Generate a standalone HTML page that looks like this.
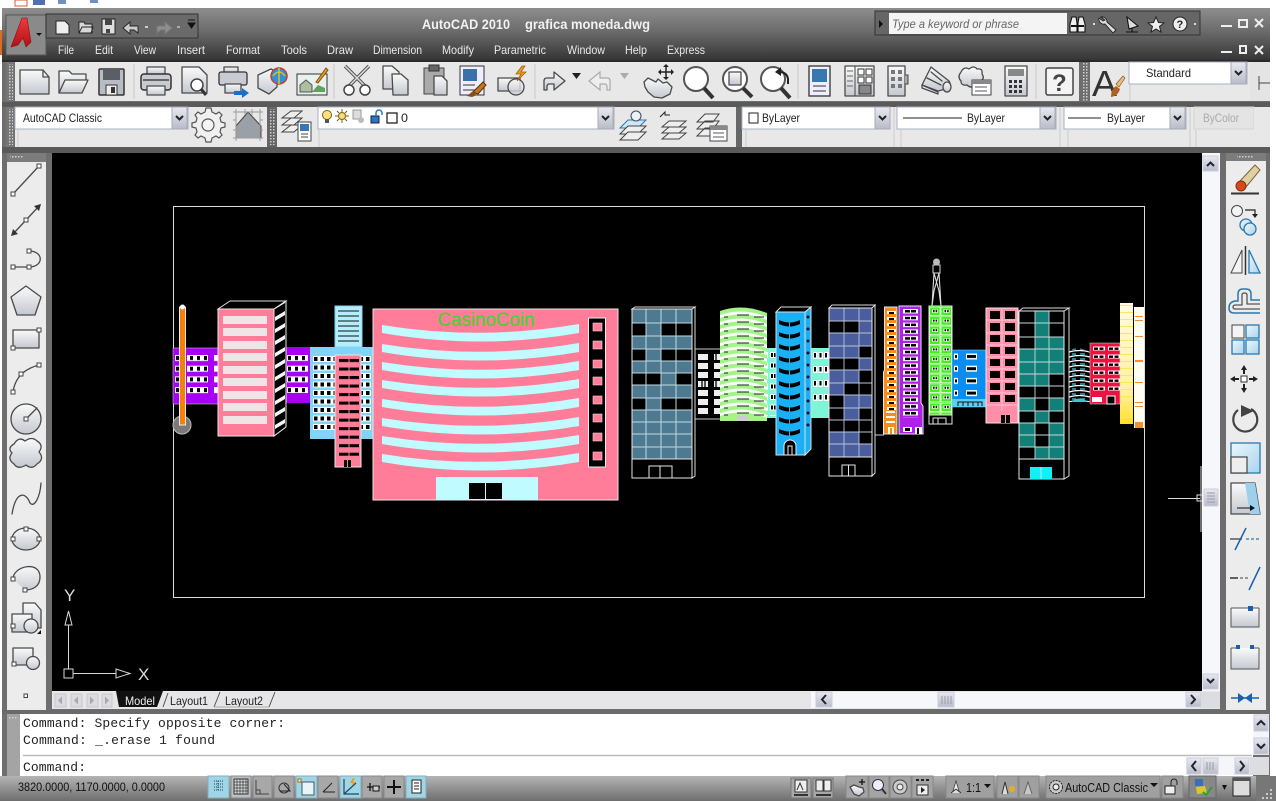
<!DOCTYPE html>
<html>
<head>
<meta charset="utf-8">
<title>AutoCAD 2010</title>
<style>
html,body{margin:0;padding:0;background:#fff;width:1276px;height:801px;overflow:hidden}
svg{display:block;position:absolute;left:0;top:0;filter:blur(.35px)}
text{font-family:"Liberation Sans",sans-serif}
.m{font-size:12px;fill:#e8e8e8}
.t{font-size:12px;fill:#222}
.c{font-family:"Liberation Mono",monospace;font-size:13px;fill:#222}
.i{fill:url(#ic);stroke:#4a4a4a;stroke-width:1.3;stroke-linejoin:round}
.n{fill:none;stroke:#4a4a4a;stroke-width:1.3;stroke-linejoin:round;stroke-linecap:round}
.b{fill:url(#bl);stroke:#2a78b0;stroke-width:1.3}
.bn{fill:none;stroke:#2a78b0;stroke-width:1.5}
.w{fill:none;stroke:#e6e6e6;stroke-width:1}
.p{fill:#fff;stroke:#444;stroke-width:1}
</style>
</head>
<body>
<svg width="1276" height="801" viewBox="0 0 1276 801" xmlns="http://www.w3.org/2000/svg">
<defs>
<linearGradient id="tb" x1="0" y1="0" x2="0" y2="1"><stop offset="0" stop-color="#8e8e8e"/><stop offset=".45" stop-color="#6a6a6a"/><stop offset="1" stop-color="#333"/></linearGradient>
<linearGradient id="ic" x1="0" y1="0" x2="0" y2="1"><stop offset="0" stop-color="#fafafa"/><stop offset="1" stop-color="#c4c8d0"/></linearGradient>
<linearGradient id="bl" x1="0" y1="0" x2="1" y2="1"><stop offset="0" stop-color="#eef6fb"/><stop offset="1" stop-color="#a8d4ee"/></linearGradient>
<linearGradient id="sb" x1="0" y1="0" x2="0" y2="1"><stop offset="0" stop-color="#b4b4b4"/><stop offset="1" stop-color="#6e6e6e"/></linearGradient>
<linearGradient id="btn" x1="0" y1="0" x2="0" y2="1"><stop offset="0" stop-color="#e8eaf0"/><stop offset="1" stop-color="#b8bcc8"/></linearGradient>
<linearGradient id="red" x1="0" y1="0" x2="0" y2="1"><stop offset="0" stop-color="#f03a3a"/><stop offset="1" stop-color="#b01018"/></linearGradient>
<linearGradient id="yel" x1="0" y1="0" x2="0" y2="1"><stop offset="0" stop-color="#fffbe0"/><stop offset=".75" stop-color="#fff0a0"/><stop offset="1" stop-color="#ffe020"/></linearGradient>
<pattern id="pa" patternUnits="userSpaceOnUse" x="175" y="355" width="7" height="10.7"><rect x="0" y="0" width="7" height="6" fill="#fff"/><rect x="1" y="1" width="3" height="4" fill="#000"/></pattern>
<pattern id="pb" patternUnits="userSpaceOnUse" x="313" y="356" width="6.5" height="8.5"><rect width="6.5" height="6" fill="#fff"/><rect x="1" y="1" width="3.5" height="4" fill="#000"/></pattern>
<pattern id="pc" patternUnits="userSpaceOnUse" x="337" y="358" width="24" height="8.52"><rect x="2" y="1" width="9.5" height="3" fill="#000"/><rect x="12.5" y="1" width="9.5" height="3" fill="#000"/></pattern>
<pattern id="pd" patternUnits="userSpaceOnUse" x="886" y="310" width="11" height="6"><rect x="1" y="1" width="9" height="3" fill="#fff"/><rect x="3" y="2" width="5" height="2" fill="#000"/></pattern>
<pattern id="pe" patternUnits="userSpaceOnUse" x="901" y="309" width="20" height="6.8"><rect x="2" y="0" width="15" height="4.5" fill="#fff"/><rect x="4" y="1" width="5" height="2.5" fill="#000"/><rect x="10" y="1" width="5" height="2.5" fill="#000"/></pattern>
<pattern id="pf" patternUnits="userSpaceOnUse" x="929" y="307" width="11.5" height="9.6"><rect x=".5" y="0" width="10.5" height="8.6" fill="none" stroke="#fff" stroke-width=".8"/><rect x="3" y="2.5" width="6" height="3.2" fill="#fff"/><rect x="4" y="3" width="1.6" height="2" fill="#000"/><rect x="6.6" y="3" width="1.6" height="2" fill="#000"/></pattern>
<pattern id="pg" patternUnits="userSpaceOnUse" x="953" y="352" width="33" height="12.2"><rect x="1" y="1.5" width="4" height="6" fill="#fff"/><rect x="13" y="1.5" width="11" height="6" fill="#fff"/><rect x="14" y="3" width="9" height="3" fill="#000"/><rect x="2" y="3" width="2" height="3" fill="#000"/></pattern>
<pattern id="ph" patternUnits="userSpaceOnUse" x="1092" y="345" width="15" height="8"><rect x="1" y="1.5" width="12" height="4" fill="#fff"/><rect x="2" y="2.5" width="4" height="2.4" fill="#000"/><rect x="7.5" y="2.5" width="4" height="2.4" fill="#000"/></pattern>
<pattern id="pi" patternUnits="userSpaceOnUse" x="769" y="350" width="9" height="10.5"><rect x="1" y="2" width="7" height="6" fill="#fff"/><rect x="2" y="3" width="2" height="4" fill="#000"/><rect x="5" y="3" width="2" height="4" fill="#000"/></pattern>
<pattern id="pj" patternUnits="userSpaceOnUse" x="813" y="350" width="5.5" height="14"><rect x="0" y="2" width="4.5" height="7" fill="#fff"/><rect x="1" y="3" width="2" height="4.5" fill="#000"/></pattern>
<pattern id="pk" patternUnits="userSpaceOnUse" x="1120" y="305" width="13" height="7"><rect y="0" width="13" height="1" fill="#ffe860"/></pattern>
<pattern id="pl" patternUnits="userSpaceOnUse" x="1069" y="350" width="21" height="5"><path d="M0,2 Q10,-1 21,2" stroke="#fff" stroke-width="1.2" fill="none"/><path d="M3,4 h4 M11,4 h5" stroke="#4cd" stroke-width="1.2"/></pattern>
<pattern id="st" patternUnits="userSpaceOnUse" width="12" height="12" patternTransform="translate(274 309)"><rect width="12" height="12" fill="#000"/><path d="M1,8 L11,2 L11,6 L1,12z" fill="#f4f4f4"/></pattern>
<pattern id="dt" patternUnits="userSpaceOnUse" width="3" height="3"><rect width="1.5" height="1.5" fill="#d0d0d0"/></pattern>
<g id="cw"><path d="M779,0 Q789.5,5 800,0 L800,4 Q789.5,9 779,4z" fill="#000"/><path d="M789.5,2.5 v4" stroke="#19b0f5" stroke-width="1"/></g>
<g id="gb"><path d="M0,0 Q23,-8 47,2 L47,5 Q23,-5 0,3z" fill="#fff" opacity=".9"/><path d="M4,2 h4 M17,0 h12 M34,2 h10" stroke="#222" stroke-width="1"/></g>
<g id="dd"><rect width="15" height="22" fill="url(#btn)" stroke="#a8acb8"/><path d="M4,9 l3.5,3.5 l3.5,-3.5" fill="none" stroke="#222" stroke-width="2"/></g>
</defs>

<!-- top strip -->
<rect width="1276" height="801" fill="#fff"/>
<rect x="15" y="0" width="12" height="6" fill="none" stroke="#d06030"/><rect x="33" y="0" width="12" height="5" fill="#5070b0"/><rect x="58" y="0" width="8" height="4" fill="#7090c0"/><rect x="90" y="0" width="8" height="3" fill="#7090c0"/>
<rect x="0" y="30" width="3" height="25" fill="#e06a20"/>

<!-- window frame -->
<rect x="2" y="8" width="1268" height="770" fill="#6e6e6e"/>
<rect x="2" y="8" width="1268" height="53" fill="url(#tb)"/>
<rect x="2" y="60" width="1268" height="2" fill="#2a2a2a"/>
<rect x="2" y="102" width="1268" height="5" fill="#5a5a5a"/>
<rect x="2" y="147" width="1268" height="6" fill="#5a5a5a"/>

<!-- App button -->
<rect x="6" y="15" width="40" height="40" fill="#8a8a8a" stroke="#555"/>
<path d="M11,47 L22,18 L27,18 L31,42 L26,47 L23,38 L18,45z" fill="url(#red)" stroke="#8a1010" stroke-width=".6"/>
<path d="M36,33 h6 l-3,3z" fill="#111"/>

<!-- QAT -->
<rect x="46" y="14" width="152" height="24" fill="#6a6a6a" stroke="#333"/>
<path d="M56,21 h9 l4,4 v9 h-13z" fill="#eee" stroke="#222"/>
<path d="M79,33 v-11 h5 l1,2 h7 v9z M79,33 l3,-6 h11 l-2,6z" fill="#d8d8d8" stroke="#222" stroke-width=".9"/>
<rect x="102" y="19" width="13" height="15" fill="#ddd" stroke="#222"/><rect x="105" y="19" width="7" height="6" fill="#444"/><rect x="106" y="29" width="4" height="4" fill="#444"/>
<path d="M138,33 v-7 h-8 v-4 l-7,6 l7,6 v-4 h4 l4,3z" fill="#ccc" stroke="#222" stroke-width=".9"/>
<path d="M145,27 h3" stroke="#ccc" stroke-width="2"/>
<path d="M157,33 v-7 h8 v-4 l7,6 l-7,6 v-4 h-4 l-4,3z" fill="#8e8e8e" stroke="#777"/>
<path d="M177,27 h3" stroke="#aaa" stroke-width="2"/>
<path d="M188,20 h7 M188,23 h7 l-3.500,5z" stroke="#111" fill="#111"/>

<!-- Title -->
<text x="422" y="29" font-size="14" font-weight="bold" fill="#f2f2f2" textLength="88" lengthAdjust="spacingAndGlyphs">AutoCAD 2010</text>
<text x="525" y="29" font-size="14" font-weight="bold" fill="#f2f2f2" textLength="125" lengthAdjust="spacingAndGlyphs">grafica moneda.dwg</text>

<!-- menu -->
<text class="m" x="58" y="54" textLength="16" lengthAdjust="spacingAndGlyphs">File</text>
<text class="m" x="95" y="54" textLength="18" lengthAdjust="spacingAndGlyphs">Edit</text>
<text class="m" x="134" y="54" textLength="22" lengthAdjust="spacingAndGlyphs">View</text>
<text class="m" x="177" y="54" textLength="28" lengthAdjust="spacingAndGlyphs">Insert</text>
<text class="m" x="226" y="54" textLength="34" lengthAdjust="spacingAndGlyphs">Format</text>
<text class="m" x="281" y="54" textLength="26" lengthAdjust="spacingAndGlyphs">Tools</text>
<text class="m" x="327" y="54" textLength="26" lengthAdjust="spacingAndGlyphs">Draw</text>
<text class="m" x="373" y="54" textLength="49" lengthAdjust="spacingAndGlyphs">Dimension</text>
<text class="m" x="442" y="54" textLength="32" lengthAdjust="spacingAndGlyphs">Modify</text>
<text class="m" x="494" y="54" textLength="52" lengthAdjust="spacingAndGlyphs">Parametric</text>
<text class="m" x="567" y="54" textLength="38" lengthAdjust="spacingAndGlyphs">Window</text>
<text class="m" x="625" y="54" textLength="22" lengthAdjust="spacingAndGlyphs">Help</text>
<text class="m" x="667" y="54" textLength="38" lengthAdjust="spacingAndGlyphs">Express</text>

<!-- search -->
<rect x="875" y="11" width="325" height="24" fill="#666" stroke="#333"/>
<path d="M879,20 l4,4 l-4,4z" fill="#111"/>
<rect x="889" y="13" width="178" height="21" fill="#f4f4f4"/>
<text x="892" y="28" font-size="12" font-style="italic" fill="#666" textLength="127" lengthAdjust="spacingAndGlyphs">Type a keyword or phrase</text>
<path d="M1070,32 v-8 l2,-7 h4 l1,6 v9z M1078,32 v-9 l1,-6 h4 l2,7 v8z" fill="#eee" stroke="#111" stroke-width="1.100"/>
<path d="M1071,26 h6 M1078,26 h6" stroke="#111" stroke-width="2"/>
<path d="M1093,24 h2" stroke="#ddd" stroke-width="2"/>
<path d="M1101,17 a5,5 0 0 1 6,5 l9,8 l-3,3 l-8,-9 a5,5 0 0 1 -6,-6 l4,3 l2,-1z" fill="#ddd" stroke="#222" stroke-width=".9"/>
<path d="M1127,17 l11,9 l-9,3z M1126,32 h12 M1132,28 v4" fill="#ddd" stroke="#111" stroke-width="1.100"/>
<path d="M1156,17 l2.500,5.500 l5.500,.5 l-4.500,3.500 l1.500,5.500 l-5,-3 l-5,3 l1.500,-5.500 l-4.500,-3.500 l5.500,-.5z" fill="#eee" stroke="#222"/>
<circle cx="1180" cy="24" r="7" fill="#eee" stroke="#222"/><text x="1176.500" y="28" font-size="11" font-weight="bold" fill="#222">?</text>
<path d="M1194,24 h2" stroke="#ddd" stroke-width="2"/>
<!-- window buttons -->
<g fill="none" stroke="#eee" stroke-width="2">
<path d="M1221,26 h11"/><rect x="1239" y="20" width="8" height="7"/><path d="M1255,19 l8,8 m0,-8 l-8,8"/>
<path d="M1221,52 h11"/><rect x="1240" y="46" width="6" height="7"/><path d="M1255,46 l8,8 m0,-8 l-8,8"/>
</g>

<!-- toolbar row 1 -->
<rect x="6" y="62" width="8" height="39" fill="#777"/><rect x="8" y="64" width="5" height="36" fill="url(#dt)"/>
<rect x="15" y="62" width="1064" height="39" fill="#e8e8e8"/>
<rect x="1090" y="62" width="160" height="39" fill="#e8e8e8"/>
<rect x="1082" y="62" width="7" height="39" fill="url(#dt)"/>
<path d="M134,64 v35 M334,64 v35 M535,64 v35 M798,64 v35 M1036,64 v35" stroke="#c8c8c8"/>
<!-- new -->
<path d="M20,70 h23 l6,7 v17 h-29z" class="i"/><path d="M43,70 v7 h6" class="n"/>
<!-- open -->
<path d="M59,93 v-22 h10 l3,3 h14 v6" class="i"/><path d="M59,93 l6,-13 h23 l-6,13z" class="i"/>
<!-- save -->
<rect x="99" y="69" width="25" height="26" rx="1" fill="#b8bcc4" stroke="#333" stroke-width="1.500"/><rect x="103" y="69" width="17" height="11" fill="#5a5e66"/><rect x="106" y="85" width="11" height="10" fill="#eee" stroke="#333"/><rect x="111" y="87" width="4" height="6" fill="#333"/>
<!-- print -->
<path d="M147,74 v-7 h18 v7" class="i"/><rect x="141" y="74" width="30" height="16" rx="3" fill="#c8ccd2" stroke="#333" stroke-width="1.500"/><rect x="147" y="86" width="18" height="9" class="i"/><rect x="143" y="79" width="26" height="2" fill="#666"/>
<!-- preview -->
<path d="M182,67 h17 l8,8 v18 h-25z" class="i"/><circle cx="197" cy="85" r="6" fill="#fff" stroke="#444" stroke-width="1.500"/><path d="M201,89 l5,6" stroke="#333" stroke-width="3"/>
<!-- plot -->
<path d="M224,72 v-5 h14 v5" class="i"/><rect x="219" y="72" width="28" height="13" rx="2" fill="#c8ccd2" stroke="#333" stroke-width="1.300"/><rect x="225" y="84" width="16" height="9" class="i"/><path d="M234,91 h8 v-3 l7,5 l-7,5 v-3 h-8z" fill="#1a70c8"/>
<!-- publish -->
<path d="M258,75 l13,-6 l6,3 v15 l-8,7 l-11,-6z" class="i"/><circle cx="279" cy="76" r="8" fill="#3090d8" stroke="#c04030" stroke-width="1.500"/><path d="M273,76 q6,-8 12,0 M279,68 v16" stroke="#e0c020" fill="none" stroke-width="1.500"/>
<!-- sheet -->
<rect x="297" y="74" width="30" height="21" fill="#e8f0f0" stroke="#333"/><path d="M300,92 v-7 l6,-5 l6,5 v7z" fill="#aac0a0" stroke="#555"/><path d="M312,92 h13 v-4 l-7,-3z" fill="#60a060"/><path d="M316,82 l10,-14 l2,2 l-10,13z" fill="#e0a020" stroke="#805010"/>
<!-- cut -->
<path d="M345,66 l20,20 M369,66 l-20,20" stroke="#555" stroke-width="3.500" fill="none"/><path d="M345,66 l20,20 M369,66 l-20,20" stroke="#ddd" stroke-width="1.500" fill="none"/><circle cx="349" cy="90" r="5" fill="#fff" stroke="#444" stroke-width="1.500"/><circle cx="365" cy="90" r="5" fill="#fff" stroke="#444" stroke-width="1.500"/>
<!-- copy -->
<path d="M383,66 h9 l7,6 v17 h-16z" class="i"/><path d="M392,74 h9 l7,6 v15 h-15z" class="i"/>
<!-- paste -->
<rect x="424" y="68" width="20" height="26" fill="#aaa" stroke="#444"/><rect x="429" y="65" width="10" height="6" fill="#666" stroke="#333"/><path d="M434,76 h8 l5,5 v14 h-13z" class="i"/>
<!-- match -->
<rect x="460" y="66" width="24" height="29" fill="#eef" stroke="#333"/><rect x="463" y="69" width="14" height="12" fill="#3c70a8"/><path d="M463,85 h12 M463,90 h12" stroke="#333"/><path d="M473,92 l10,-10 l3,3 l-8,9z" fill="#c07820" stroke="#603000"/><path d="M467,96 l6,-5 l4,4 l-5,2z" fill="#805020"/>
<!-- block -->
<rect x="498" y="78" width="22" height="13" class="i"/><circle cx="516" cy="87" r="8" class="i" fill-opacity=".8"/><path d="M522,66 l-6,8 h5 l-4,7 l9,-9 h-5 l4,-6z" fill="#e8a020" stroke="#a06010" stroke-width=".8"/>
<!-- undo -->
<path d="M544,90 v-9 q0,-3 3,-3 h7 v-6 l11,9 l-11,9 v-6 h-5 q-2,0 -2,3 v3z" class="i"/>
<path d="M572,73 h9 l-4.500,6z" fill="#222"/>
<path d="M610,90 v-9 q0,-3 -3,-3 h-7 v-6 l-11,9 l11,9 v-6 h5 q2,0 2,3 v3z" fill="#eee" stroke="#aaa" stroke-width="1.200"/>
<path d="M620,73 h9 l-4.500,6z" fill="#aaa"/>
<!-- pan -->
<path d="M644,82 l4,-4 l8,4 l2,-3 l5,4 l4,-1 l5,5 l-2,7 l-8,4 l-8,-1 l-6,-5 l-3,-5z" class="i"/><path d="M666,66 v12 M660,72 h12" stroke="#222" stroke-width="1.500"/><path d="M666,64 l3,3 h-6z M666,80 l3,-3 h-6z M658,72 l3,-3 v6z M674,72 l-3,-3 v6z" fill="#222"/>
<!-- zoom realtime -->
<circle cx="696" cy="79" r="12" fill="#fff" stroke="#555" stroke-width="2"/><path d="M704,88 l9,10" stroke="#333" stroke-width="4"/>
<!-- zoom win -->
<circle cx="735" cy="79" r="12" fill="#fff" stroke="#555" stroke-width="2"/><rect x="729" y="72" width="12" height="13" class="i"/><path d="M743,88 l9,9" stroke="#333" stroke-width="4"/>
<!-- zoom prev -->
<circle cx="773" cy="79" r="12" fill="#fff" stroke="#555" stroke-width="2"/><path d="M781,88 l9,10" stroke="#333" stroke-width="4"/><path d="M779,72 q8,0 9,7 v5" fill="none" stroke="#222" stroke-width="2"/><path d="M781,67 l-6,5 l6,4z" fill="#222"/>
<!-- properties -->
<rect x="809" y="66" width="21" height="30" fill="#eef" stroke="#333" stroke-width="1.300"/><rect x="812" y="69" width="15" height="13" fill="#3878b0"/><path d="M813,86 h13 M813,91 h13" stroke="#333"/>
<!-- design center -->
<rect x="845" y="66" width="29" height="30" class="i"/><path d="M855,66 v30" stroke="#444"/><path d="M847,71 h6 M847,76 h6 M847,81 h6 M847,86 h6" stroke="#666"/><rect x="858" y="69" width="6" height="6" fill="#fff" stroke="#333"/><rect x="866" y="69" width="6" height="6" fill="#fff" stroke="#333"/><rect x="858" y="77" width="6" height="6" fill="#fff" stroke="#333"/><rect x="866" y="77" width="6" height="6" fill="#fff" stroke="#333"/><rect x="859" y="85" width="12" height="9" fill="#888" stroke="#333"/>
<!-- tool palettes -->
<rect x="888" y="66" width="17" height="30" class="i"/><path d="M905,75 h3 v9 h-3" fill="#aaa" stroke="#444"/><g fill="#777"><rect x="891" y="70" width="4" height="4"/><rect x="898" y="70" width="4" height="4"/><rect x="891" y="77" width="4" height="4"/><rect x="898" y="77" width="4" height="4"/><rect x="891" y="84" width="4" height="4"/><rect x="898" y="84" width="4" height="4"/></g>
<!-- sheet set -->
<path d="M922,85 l9,-18 l18,14 a5,5 0 0 1 -3,8 l-8,2z" class="i"/><path d="M922,85 l16,7 v2 l-16,-6z M927,78 l14,7 M931,72 l11,9" class="n"/><ellipse cx="947" cy="87" rx="4" ry="5" class="i"/>
<!-- markup -->
<path d="M961,72 q3,-6 8,-3 q5,-4 8,0 q6,-1 5,5 q3,4 -1,7 q0,5 -6,4 q-4,4 -8,0 q-6,1 -6,-4 q-4,-4 0,-9z" class="i"/><rect x="972" y="80" width="19" height="15" fill="#fff" stroke="#444"/><rect x="972" y="80" width="19" height="4" fill="#888"/><path d="M975,87 h12 M975,91 h12" stroke="#556"/>
<!-- calc -->
<rect x="1005" y="66" width="22" height="30" class="i"/><rect x="1008" y="69" width="16" height="7" fill="#888"/><g fill="#333"><rect x="1009" y="80" width="3" height="3"/><rect x="1014" y="80" width="3" height="3"/><rect x="1019" y="80" width="3" height="3"/><rect x="1009" y="85" width="3" height="3"/><rect x="1014" y="85" width="3" height="3"/><rect x="1019" y="85" width="3" height="3"/><rect x="1009" y="90" width="3" height="3"/><rect x="1014" y="90" width="3" height="3"/><rect x="1019" y="90" width="3" height="3"/></g>
<!-- help -->
<rect x="1046" y="68" width="27" height="27" rx="2" fill="#f4f4f4" stroke="#444" stroke-width="1.500"/><text x="1052" y="91" font-size="24" font-weight="bold" fill="#444">?</text>
<!-- text style -->
<text x="1092" y="96" font-size="36" fill="#333" textLength="25" lengthAdjust="spacingAndGlyphs">A</text>
<path d="M1116,84 l7,-8 l2,2 l-6,9z" fill="#e0c080" stroke="#805010" stroke-width=".6"/><path d="M1111,97 q0,-8 5,-11 l4,3 q-2,7 -9,8z" fill="#b06020"/>
<rect x="1129" y="62" width="118" height="22" fill="#fff" stroke="#a8b0c0"/>
<text class="t" x="1146" y="77" textLength="45" lengthAdjust="spacingAndGlyphs">Standard</text>
<use href="#dd" x="1231" y="62"/>
<path d="M1130,84 v17" stroke="#ccc"/>
<rect x="1250" y="62" width="20" height="39" fill="#e4e4e4"/>
<path d="M1259,76 v14 M1259,83 h11" stroke="#444"/>

<!-- toolbar row 2 -->
<rect x="6" y="107" width="8" height="40" fill="#777"/><rect x="8" y="109" width="5" height="36" fill="url(#dt)"/>
<rect x="15" y="107" width="252" height="40" fill="#e8e8e8"/>
<rect x="267" y="107" width="10" height="40" fill="#666"/><rect x="270" y="109" width="5" height="36" fill="url(#dt)"/>
<rect x="277" y="107" width="459" height="40" fill="#e8e8e8"/>
<rect x="736" y="107" width="6" height="40" fill="#666"/>
<rect x="742" y="107" width="528" height="40" fill="#e8e8e8"/>

<rect x="15" y="107" width="173" height="22" fill="#fff" stroke="#a8b0c0"/>
<text class="t" x="23" y="122" textLength="79" lengthAdjust="spacingAndGlyphs">AutoCAD Classic</text>
<use href="#dd" x="172" y="107"/>
<path d="M18,130 v17" stroke="#ccc"/>
<!-- gear -->
<path d="M208,108 l3,0 l1,4 l4,2 l3,-2 l3,3 l-2,3 l1,4 l4,1 v4 l-4,1 l-1,4 l2,3 l-3,3 l-3,-2 l-4,2 l-1,4 h-5 l-1,-4 l-4,-2 l-3,2 l-3,-3 l2,-3 l-1,-4 l-4,-1 v-4 l4,-1 l1,-4 l-2,-3 l3,-3 l3,2 l4,-2 l1,-4z" fill="#f0f0f0" stroke="#555" stroke-width="1.200"/><circle cx="208" cy="125" r="6" fill="#f4f4f4" stroke="#555" stroke-width="1.200"/>
<!-- house -->
<path d="M236,126 l12,-14 l13,14 v12 h-25z" fill="#9aa0a8" stroke="#444"/><path d="M233,112 h30 M233,138 h30 M236,109 v32 M260,109 v32 M245,109 v6 M252,109 v6 M233,120 h3 M233,130 h3 M260,120 h3 M260,130 h3" stroke="#999" stroke-width=".9"/>
<!-- layer manager -->
<path d="M282,118 l9,-7 h11 l-8,7z M282,125 l9,-7 h11 l-8,7z M282,132 l9,-7 h11 l-8,7z" fill="#eee" stroke="#444"/>
<rect x="298" y="122" width="13" height="19" fill="#fff" stroke="#444"/><rect x="300" y="124" width="9" height="7" fill="#3878b0"/><path d="M301,134 h7 M301,137 h7" stroke="#444"/>
<rect x="318" y="107" width="296" height="22" fill="#fff" stroke="#a8b0c0"/>
<use href="#dd" x="598" y="107"/>
<path d="M319,130 v17" stroke="#ccc"/>
<circle cx="327" cy="115" r="4.500" fill="#ffe080" stroke="#806010"/><rect x="325" y="119" width="4" height="4" fill="#555"/>
<circle cx="342" cy="116" r="3.500" fill="#f0e080" stroke="#806010"/><path d="M342,109 v3 M342,120 v3 M335,116 h3 M346,116 h3 M337,111 l2,2 M345,119 l2,2 M347,111 l-2,2 M339,119 l-2,2" stroke="#806010"/>
<rect x="353" y="110" width="8" height="9" fill="#ddd" stroke="#999"/><circle cx="361" cy="120" r="3" fill="#bbb"/>
<rect x="371" y="116" width="8" height="7" fill="#2a78c0" stroke="#124"/><path d="M376,116 v-3 a3,3 0 0 1 6,0 v2" fill="none" stroke="#2a78c0" stroke-width="1.500"/>
<rect x="387" y="113" width="10" height="10" fill="#fff" stroke="#222" stroke-width="1.300"/>
<text class="t" x="401" y="122" textLength="7" lengthAdjust="spacingAndGlyphs">0</text>
<!-- layer tools -->
<path d="M620,128 l8,-8 h18 l-8,8z" fill="#cfe6f8" stroke="#2a78b0"/><path d="M620,134 l8,-8 h18 l-8,8z" fill="#eee" stroke="#444"/><path d="M620,140 l8,-8 h18 l-8,8z" fill="#eee" stroke="#444"/><circle cx="636" cy="116" r="5" fill="#e8f0f8" stroke="#445"/>
<path d="M660,117 l5,-5 v3 h5" fill="none" stroke="#222"/><path d="M662,127 l7,-6 h17 l-7,6z M662,133 l7,-6 h17 l-7,6z M662,139 l7,-6 h17 l-7,6z" fill="#eee" stroke="#444"/>
<path d="M697,122 l8,-8 h14 l-6,8z M697,129 l8,-8 h14 l-6,8z M697,136 l8,-8 h14 l-6,8z" fill="#eee" stroke="#444"/><rect x="710" y="126" width="17" height="15" fill="#fff" stroke="#444"/><rect x="710" y="126" width="17" height="4" fill="#888"/><path d="M713,133 h11 M713,137 h11" stroke="#556"/>
<!-- props combos -->
<rect x="742" y="107" width="148" height="22" fill="#fff" stroke="#a8b0c0"/>
<rect x="749" y="113" width="9" height="10" fill="#fff" stroke="#222"/>
<text class="t" x="762" y="122" textLength="38" lengthAdjust="spacingAndGlyphs">ByLayer</text>
<use href="#dd" x="875" y="107"/>
<path d="M746,130 v17 M894,107 v40" stroke="#ccc"/>
<rect x="897" y="107" width="159" height="22" fill="#fff" stroke="#a8b0c0"/>
<path d="M903,118 h59" stroke="#222"/>
<text class="t" x="967" y="122" textLength="38" lengthAdjust="spacingAndGlyphs">ByLayer</text>
<use href="#dd" x="1040" y="107"/>
<path d="M901,130 v17 M1060,107 v40" stroke="#ccc"/>
<rect x="1064" y="107" width="122" height="22" fill="#fff" stroke="#a8b0c0"/>
<path d="M1068,118 h33" stroke="#222"/>
<text class="t" x="1107" y="122" textLength="38" lengthAdjust="spacingAndGlyphs">ByLayer</text>
<use href="#dd" x="1170" y="107"/>
<path d="M1068,130 v17 M1190,107 v40" stroke="#ccc"/>
<rect x="1194" y="107" width="60" height="22" fill="#e4e4e4" stroke="#d4d4d4"/>
<text x="1203" y="122" font-size="12" fill="#aaa" textLength="36" lengthAdjust="spacingAndGlyphs">ByColor</text>
<path d="M1196,130 v17" stroke="#ccc"/>
<rect x="1254" y="107" width="16" height="40" fill="#e8e8e8"/>

<!-- canvas -->
<rect x="52" y="153" width="1150" height="538" fill="#000"/>
<rect x="173.500" y="206.500" width="971" height="391" fill="none" stroke="#dcdcdc"/>

<!-- UCS -->
<g fill="none" stroke="#d8d8d8">
<rect x="64" y="669" width="9" height="9"/>
<path d="M68.500,669 V625 M65,625 L68.500,611 L72,625z M73,673.500 H116 M116,669 L130,673.500 L116,678z"/>
</g>
<text x="64" y="601" font-size="17" fill="#dcdcdc">Y</text>
<text x="138" y="680" font-size="17" fill="#dcdcdc">X</text>

<!-- purple left -->
<rect x="173" y="348" width="46" height="56" fill="#a800f4" stroke="#ddd" stroke-width=".5"/>
<rect x="175" y="355" width="5" height="40" fill="url(#pa)"/>
<rect x="187" y="355" width="21" height="40" fill="url(#pa)"/>
<rect x="214" y="355" width="4" height="40" fill="url(#pa)"/>
<!-- purple 2 -->
<rect x="286" y="347" width="24" height="56" fill="#a800f4"/>
<rect x="287" y="353" width="21" height="40" fill="url(#pa)"/>
<!-- pole -->
<circle cx="182" cy="425" r="9" fill="#7a7a7a" stroke="#bbb"/>
<rect x="179.500" y="307" width="6" height="118" fill="#f57f0a" stroke="#eee"/>
<circle cx="182.500" cy="307" r="2.500" fill="#fff"/>
<!-- pink 1 -->
<path d="M218,309 L230,301 H286 L274,309z" fill="#000" stroke="#ddd"/>
<path d="M274,309 L286,301 V427 L274,436z" fill="url(#st)" stroke="#eee"/>
<rect x="218" y="309" width="56" height="127" fill="#ff7d99" stroke="#e8e8e8"/>
<g fill="#efe4e6"><rect x="223" y="316" width="44" height="8"/><rect x="223" y="328" width="44" height="8"/><rect x="223" y="341" width="44" height="8"/><rect x="223" y="353" width="44" height="8"/><rect x="223" y="366" width="44" height="8"/><rect x="223" y="378" width="44" height="8"/><rect x="223" y="391" width="44" height="8"/><rect x="223" y="403" width="44" height="8"/><rect x="223" y="416" width="44" height="8"/></g>
<!-- light blue -->
<rect x="310" y="347" width="63" height="92" fill="#7fd4f8"/>
<rect x="313" y="356" width="58" height="76" fill="url(#pb)"/>
<rect x="335" y="306" width="27" height="41" fill="#b4eefc" stroke="#7fd4f8"/>
<path d="M338,311 h21 M338,316 h21 M338,321 h21 M338,326 h21 M338,331 h21 M338,336 h21 M338,341 h21" stroke="#111" stroke-width="1.100"/>
<rect x="335" y="355" width="26" height="112" fill="#ff7d99" stroke="#e8e8e8"/>
<rect x="337" y="358" width="22" height="100" fill="url(#pc)"/>
<rect x="344" y="460" width="3" height="7" fill="#000"/><rect x="348" y="460" width="3" height="7" fill="#000"/>

<!-- main casino -->
<rect x="373" y="309" width="245" height="191" fill="#ff7d99" stroke="#e8e8e8"/>
<g fill="#c0fbff">
<path d="M382,325 Q480,341 579,324 v9 Q480,350 382,333z"/>
<path d="M382,344 Q480,360 579,343 v9 Q480,369 382,352z"/>
<path d="M382,362 Q480,378 579,361 v9 Q480,387 382,370z"/>
<path d="M382,380 Q480,396 579,379 v9 Q480,405 382,388z"/>
<path d="M382,399 Q480,415 579,398 v9 Q480,424 382,407z"/>
<path d="M382,418 Q480,434 579,417 v9 Q480,443 382,426z"/>
<path d="M382,436 Q480,452 579,435 v9 Q480,461 382,444z"/>
<path d="M382,454 Q480,470 579,453 v9 Q480,479 382,462z"/>
</g>
<rect x="588.500" y="318" width="17" height="149" fill="#000" stroke="#eee"/>
<g fill="#ff7d99" stroke="#f4d0d8" stroke-width=".6"><rect x="593" y="323" width="9" height="8"/><rect x="593" y="341" width="9" height="8"/><rect x="593" y="360" width="9" height="8"/><rect x="593" y="377" width="9" height="8"/><rect x="593" y="396" width="9" height="8"/><rect x="593" y="414" width="9" height="8"/><rect x="593" y="433" width="9" height="8"/><rect x="593" y="452" width="9" height="8"/></g>
<rect x="436" y="477" width="102" height="23" fill="#c0fbff"/>
<rect x="469" y="483" width="16" height="16" fill="#000"/><rect x="486" y="483" width="16" height="16" fill="#000"/>
<text x="438" y="326" font-size="19" fill="#2ee020" textLength="97" lengthAdjust="spacingAndGlyphs">CasinoCoin</text>

<!-- building A teal -->
<path d="M632,309 L635,307 H695 L692,309z M692,309 L695,307 V476 L692,478z" fill="#000" stroke="#ddd"/>
<rect x="632" y="309" width="60" height="150" fill="#4d7a90"/>
<g fill="#000"><rect x="632" y="323" width="14" height="13"/><rect x="661" y="323" width="31" height="13"/><rect x="632" y="349" width="14" height="12"/><rect x="661" y="349" width="31" height="12"/><rect x="632" y="373" width="29" height="12"/><rect x="676" y="373" width="16" height="12"/><rect x="632" y="398" width="14" height="12"/><rect x="661" y="398" width="31" height="12"/><rect x="632" y="459" width="60" height="19"/></g>
<path d="M646,309 V459 M661,309 V459 M676,309 V459 M632,323 H692 M632,336 H692 M632,349 H692 M632,361 H692 M632,373 H692 M632,385 H692 M632,398 H692 M632,410 H692 M632,422 H692 M632,434 H692 M632,447 H692" stroke="#c4d8de" stroke-width="1"/>
<rect x="632" y="309" width="60" height="169" class="w"/>
<path d="M632,459 H692 M649,478 V466 H672 V478 M660,466 V478" class="w"/>

<!-- black connector -->
<path d="M695,349 H720 M695,419 H720" stroke="#ccc"/>
<g fill="#eee"><rect x="698" y="354" width="10" height="6"/><rect x="698" y="363" width="10" height="6"/><rect x="698" y="372" width="10" height="6"/><rect x="698" y="381" width="10" height="6"/><rect x="698" y="390" width="10" height="6"/><rect x="698" y="399" width="10" height="6"/><rect x="698" y="408" width="10" height="6"/><rect x="714" y="354" width="6" height="6"/><rect x="714" y="363" width="6" height="6"/><rect x="714" y="372" width="6" height="6"/><rect x="714" y="381" width="6" height="6"/><rect x="714" y="390" width="6" height="6"/><rect x="714" y="399" width="6" height="6"/><rect x="714" y="408" width="6" height="6"/></g>
<path d="M702,381 v6 M705,381 v6 M716,354 v6 M716,381 v6" stroke="#000" stroke-width="1.300"/>

<!-- green curved -->
<path d="M720,311 Q742,303 767,313 V421 H720z" fill="#a4f28a"/>
<use href="#gb" x="720" y="315"/><use href="#gb" x="720" y="322"/><use href="#gb" x="720" y="329"/><use href="#gb" x="720" y="336"/><use href="#gb" x="720" y="343"/><use href="#gb" x="720" y="350"/><use href="#gb" x="720" y="357"/><use href="#gb" x="720" y="364"/><use href="#gb" x="720" y="371"/><use href="#gb" x="720" y="378"/><use href="#gb" x="720" y="385"/><use href="#gb" x="720" y="392"/><use href="#gb" x="720" y="399"/><use href="#gb" x="720" y="406"/><use href="#gb" x="720" y="413"/>
<rect x="737" y="416" width="11" height="5" fill="#ccc"/>

<!-- connector teal -->
<rect x="767" y="348" width="9" height="70" fill="#7ff5d8"/><rect x="767" y="350" width="9" height="66" fill="url(#pi)"/>
<rect x="811" y="348" width="18" height="70" fill="#7ff5d8"/><rect x="813" y="350" width="16" height="56" fill="url(#pj)"/>

<!-- blue building -->
<path d="M776,312 L781,307 H811 L805,312z" fill="#000" stroke="#ddd"/>
<path d="M805,312 L811,307 V449 L805,455z" fill="#19b0f5" stroke="#ddd"/>
<rect x="776" y="312" width="29" height="143" fill="#19b0f5" stroke="#ddd"/>
<use href="#cw" y="320"/><use href="#cw" y="332"/><use href="#cw" y="344"/><use href="#cw" y="356"/><use href="#cw" y="368"/><use href="#cw" y="381"/><use href="#cw" y="393"/><use href="#cw" y="405"/><use href="#cw" y="417"/><use href="#cw" y="429"/>
<g fill="#012"><circle cx="808" cy="317" r="1.500"/><circle cx="808" cy="329" r="1.500"/><circle cx="808" cy="341" r="1.500"/><circle cx="808" cy="353" r="1.500"/><circle cx="808" cy="365" r="1.500"/><circle cx="808" cy="377" r="1.500"/><circle cx="808" cy="389" r="1.500"/><circle cx="808" cy="401" r="1.500"/><circle cx="808" cy="413" r="1.500"/><circle cx="808" cy="425" r="1.500"/></g>
<path d="M784,455 v-9 a6,6 0 0 1 12,0 v9z" fill="#000" stroke="#eee"/><path d="M788,455 v-9 h4 v9" stroke="#eee" fill="none"/>

<!-- building B -->
<path d="M829,308 L832,305 H875 L872,308z M872,308 L875,305 V473 L872,476z" fill="#000" stroke="#ddd"/>
<rect x="829" y="308" width="43" height="149" fill="#4a5e9e"/>
<g fill="#000"><rect x="829" y="321" width="30" height="12"/><rect x="859" y="346" width="13" height="12"/><rect x="829" y="358" width="30" height="12"/><rect x="859" y="370" width="13" height="13"/><rect x="844" y="383" width="28" height="12"/><rect x="829" y="395" width="15" height="13"/><rect x="829" y="408" width="15" height="12"/><rect x="859" y="408" width="13" height="12"/><rect x="829" y="420" width="43" height="12"/><rect x="859" y="432" width="13" height="12"/></g>
<path d="M844,308 V457 M859,308 V457 M829,321 H872 M829,333 H872 M829,346 H872 M829,358 H872 M829,370 H872 M829,383 H872 M829,395 H872 M829,408 H872 M829,420 H872 M829,432 H872 M829,444 H872" stroke="#b8c4d8" stroke-width=".9"/>
<rect x="829" y="308" width="43" height="168" class="w"/>
<path d="M829,457 H872 M842,476 V465 H855 V476 M848.500,465 V476" class="w"/>
<path d="M875,435 H884" stroke="#ccc"/>

<!-- orange + purple -->
<path d="M884.500,307 H897 V434 H883.500 V372 L884.500,370z" fill="#f58c1e" stroke="#e8e8e8"/>
<rect x="886" y="310" width="11" height="100" fill="url(#pd)"/>
<path d="M886,412 h9 M886,417 h9 M886,422 h9" stroke="#fff" stroke-width="2"/><rect x="888" y="427" width="6" height="7" fill="#fff"/><rect x="890" y="428" width="2" height="6" fill="#f58c1e"/>
<path d="M899,306 H921 V403 L923,406 V434 H899z" fill="#b020e8" stroke="#e8e8e8"/>
<rect x="901" y="309" width="20" height="109" fill="url(#pe)"/>
<rect x="903" y="427" width="9" height="5" fill="#fff"/><rect x="905" y="428" width="5" height="3" fill="#000"/><rect x="915" y="427" width="7" height="7" fill="#fff"/><rect x="917" y="428" width="2" height="6" fill="#000"/>

<!-- green tower -->
<path d="M932,306 L934,273 H939 L941,306 M934,273 L939,291 M939,273 L934,291 M934,291 L932,306 M939,291 L941,306" fill="none" stroke="#ddd" stroke-width="1.100"/>
<rect x="933" y="265" width="7" height="8" fill="none" stroke="#ddd"/>
<circle cx="936.500" cy="262" r="3.500" fill="#bbb"/>
<rect x="929" y="306" width="23" height="109" fill="#44ee22"/>
<rect x="929" y="307" width="23" height="107" fill="url(#pf)"/>
<rect x="929" y="306" width="23" height="118" class="w"/>
<path d="M929,415 H952 M933,424 V418 H946 V424 M938,418 V424" class="w"/>

<!-- blue mid -->
<rect x="952" y="350" width="34" height="57" fill="#0a8cf0" stroke="#ccc" stroke-width=".5"/>
<rect x="953" y="352" width="33" height="46" fill="url(#pg)"/>
<rect x="952" y="399" width="34" height="8" fill="#5ecdf5"/>
<path d="M958,406 v-4 h24 v4 M963,402 v4 M968,402 v4 M973,402 v4 M978,402 v4" stroke="#111" fill="none"/>

<!-- pink C -->
<rect x="986" y="308" width="32" height="115" fill="#ff8fa8" stroke="#e8e8e8"/>
<g fill="#000"><rect x="990" y="311" width="10" height="8"/><rect x="1005" y="311" width="10" height="8"/><rect x="990" y="323" width="10" height="8"/><rect x="1005" y="323" width="10" height="8"/><rect x="990" y="335" width="10" height="7"/><rect x="1005" y="335" width="10" height="7"/><rect x="990" y="347" width="10" height="7"/><rect x="1005" y="347" width="10" height="7"/><rect x="990" y="359" width="10" height="7"/><rect x="1005" y="359" width="10" height="7"/><rect x="990" y="371" width="10" height="7"/><rect x="1005" y="371" width="10" height="7"/><rect x="990" y="383" width="10" height="7"/><rect x="1005" y="383" width="10" height="7"/><rect x="990" y="395" width="10" height="7"/><rect x="1005" y="395" width="10" height="7"/><rect x="1001" y="415" width="4" height="8"/><rect x="1006" y="415" width="4" height="8"/></g>
<path d="M986,320 H1018 M986,333 H1018 M986,345 H1018 M986,357 H1018 M986,369 H1018 M986,381 H1018 M986,393 H1018 M986,405 H1018 M1002,308 V410" stroke="#f4d8de" stroke-width=".8"/>

<!-- building D -->
<path d="M1019,311 L1023,308 H1069 L1064,311z M1064,311 L1069,308 V476 L1064,479z" fill="#000" stroke="#ddd"/>
<rect x="1019" y="311" width="45" height="148" fill="#128078"/>
<g fill="#000"><rect x="1019" y="311" width="16" height="12"/><rect x="1049" y="311" width="15" height="12"/><rect x="1019" y="323" width="16" height="14"/><rect x="1049" y="323" width="15" height="14"/><rect x="1019" y="337" width="16" height="12"/><rect x="1049" y="374" width="15" height="12"/><rect x="1019" y="386" width="45" height="12"/><rect x="1035" y="398" width="14" height="13"/><rect x="1019" y="411" width="16" height="12"/><rect x="1049" y="411" width="15" height="12"/><rect x="1035" y="423" width="14" height="24"/><rect x="1019" y="447" width="16" height="12"/></g>
<path d="M1035,311 V459 M1049,311 V459 M1019,323 H1064 M1019,337 H1064 M1019,349 H1064 M1019,362 H1064 M1019,374 H1064 M1019,386 H1064 M1019,398 H1064 M1019,411 H1064 M1019,423 H1064 M1019,435 H1064 M1019,447 H1064" stroke="#c8d8d8" stroke-width=".9"/>
<rect x="1019" y="311" width="45" height="168" class="w"/>
<path d="M1019,459 H1064" class="w"/>
<rect x="1030" y="467" width="22" height="12" fill="#10f0f8"/><path d="M1041,467 V479" stroke="#aee"/>

<!-- curved small -->
<path d="M1069,350 Q1080,346 1090,352 V402 H1069z" fill="url(#pl)"/>
<path d="M1071,402 q8,-7 17,0" fill="#30c8d8"/>

<!-- red -->
<rect x="1090" y="343" width="30" height="61" fill="#ee1040" stroke="#ddd" stroke-width=".5"/>
<rect x="1092" y="345" width="28" height="48" fill="url(#ph)"/>
<rect x="1092" y="397" width="10" height="5" fill="#fff"/><rect x="1107" y="396" width="8" height="8" fill="#000" stroke="#fff"/>

<!-- yellow/white -->
<rect x="1134" y="307" width="10" height="121" fill="#fffdf0"/>
<g fill="#f09030"><rect x="1135" y="316" width="8" height="1"/><rect x="1135" y="320" width="8" height="1"/><rect x="1135" y="336" width="8" height="1"/><rect x="1135" y="360" width="8" height="1"/><rect x="1135" y="361" width="8" height="1"/><rect x="1135" y="382" width="8" height="1"/><rect x="1135" y="402" width="8" height="1"/><rect x="1135" y="406" width="8" height="1"/><rect x="1135" y="422" width="8" height="6"/></g>
<rect x="1120" y="303" width="13" height="121" fill="url(#yel)"/>
<rect x="1120" y="305" width="13" height="119" fill="url(#pk)"/>
<rect x="1144" y="206" width="1" height="391" fill="#dcdcdc"/>

<!-- crosshair -->
<path d="M1168,498.500 H1200 M1201,466 V532" stroke="#ddd"/>
<rect x="1197" y="495" width="6" height="6" fill="none" stroke="#ddd"/>

<!-- right scrollbar -->
<rect x="1202" y="153" width="18" height="540" fill="#f5f7fb"/>
<rect x="1203" y="156" width="15" height="15" fill="url(#btn)" stroke="#ccd"/><path d="M1207,166 l3.500,-3.500 l3.500,3.500" fill="none" stroke="#223" stroke-width="2"/>
<rect x="1203" y="674" width="15" height="15" fill="url(#btn)" stroke="#ccd"/><path d="M1207,679 l3.500,3.500 l3.500,-3.500" fill="none" stroke="#223" stroke-width="2"/>
<rect x="1204" y="489" width="14" height="17" rx="1" fill="url(#btn)" stroke="#ccd"/><path d="M1207,493 h8 M1207,496 h8 M1207,499 h8 M1207,502 h8" stroke="#99a"/>
<path d="M1201,466 V532" stroke="#ddd"/>
<rect x="1220" y="153" width="6" height="560" fill="#6c6c6c"/>

<!-- right toolbar -->
<rect x="1226" y="153" width="40" height="557" fill="#ececec"/>
<rect x="1226" y="153" width="40" height="8" fill="#7c7c7c"/><rect x="1237" y="155" width="16" height="4" fill="url(#dt)"/>
<!-- erase -->
<path d="M1240,181 L1255,165 L1260,170 L1246,187z" fill="#e0d0a0" stroke="#806040"/>
<circle cx="1241" cy="186" r="5" fill="#d84818" stroke="#803010"/>
<path d="M1231,193.500 H1259" stroke="#333" stroke-width="2"/>
<!-- copy -->
<circle cx="1237" cy="211" r="5.500" fill="#f4f4f4" stroke="#444"/><path d="M1245,210 h10 v5" fill="none" stroke="#222" stroke-width="1.200"/><path d="M1252,214 h6 l-3,4z" fill="#222"/>
<circle cx="1246" cy="225" r="6" class="b"/><circle cx="1250" cy="229" r="6" class="b"/>
<!-- mirror -->
<path d="M1245.500,246 V275" stroke="#333" stroke-width="1.500"/>
<path d="M1242,250 V273 H1231z" fill="#f4f4f4" stroke="#444"/><path d="M1249,250 V273 H1260z" class="b"/>
<!-- offset -->
<path d="M1260,313 H1234 Q1229,313 1229,308 Q1229,302 1235,301 H1238 V294 Q1238,289 1243,289 H1246 Q1251,289 1251,294 V300 H1260" class="bn"/>
<path d="M1260,309 H1235 Q1233,309 1233,307 Q1233,305 1236,305 H1242 V295 Q1242,293 1244.500,293 Q1247,293 1247,295 V304 H1260" fill="none" stroke="#555" stroke-width="1.300"/>
<!-- array -->
<rect x="1232" y="325" width="12" height="13" fill="#f4f4f4" stroke="#444"/><rect x="1246" y="325" width="13" height="13" class="b"/><rect x="1232" y="340" width="12" height="14" class="b"/><rect x="1246" y="340" width="13" height="14" class="b"/>
<!-- move -->
<rect x="1241" y="376" width="6" height="6" fill="#fff" stroke="#333"/>
<path d="M1244,374 V370 M1244,384 V388 M1239,379 H1235 M1249,379 H1253" stroke="#222" stroke-width="2"/>
<path d="M1244,365 l3,5 h-6z M1244,393 l3,-5 h-6z M1230,379 l5,-3 v6z M1258,379 l-5,-3 v6z" fill="#222"/>
<!-- rotate -->
<path d="M1238,410 A12,12 0 1 0 1251,409" fill="none" stroke="#444" stroke-width="2.200"/><path d="M1241,405 L1254,411 L1241,417z" fill="#444"/>
<!-- scale -->
<rect x="1231" y="443" width="29" height="30" class="b"/>
<rect x="1231" y="457" width="16" height="16" fill="#eee" stroke="#444" stroke-width="1.200"/>
<!-- stretch -->
<path d="M1231,483 H1255 L1260,514 H1231z" class="i"/><path d="M1245,483 H1255 L1260,514 H1250z" fill="#9ed0ec"/>
<path d="M1237,508 H1250" stroke="#111"/><path d="M1250,505 l5,3 l-5,3z" fill="#111"/>
<!-- trim -->
<path d="M1230,539 H1242" stroke="#444" stroke-width="1.300"/><path d="M1246,539 H1260" stroke="#2a78b0" stroke-width="1.300" stroke-dasharray="3 2"/><path d="M1235,550 L1246,528" stroke="#1a60b0" stroke-width="1.500"/>
<!-- extend -->
<path d="M1230,578 H1238" stroke="#333" stroke-width="1.500"/><path d="M1240,578 H1250" stroke="#444" stroke-dasharray="3 2"/><path d="M1249,590 L1260,567" stroke="#1a60b0" stroke-width="1.500"/>
<!-- break at point -->
<path d="M1231,608 H1259 M1231,608 V627 H1259 V608" fill="url(#ic)" stroke="#555"/><rect x="1248" y="606" width="5" height="5" fill="#1a60b0"/>
<!-- break -->
<path d="M1231,648 V669 H1259 V648" fill="url(#ic)" stroke="#555"/><path d="M1231,648 H1236 M1254,648 H1259" stroke="#555"/><rect x="1236" y="645" width="4" height="4" fill="#1a60b0"/><rect x="1250" y="645" width="4" height="4" fill="#1a60b0"/>
<!-- join -->
<path d="M1231,698 H1259" stroke="#1a60b0" stroke-width="1.500"/><path d="M1238,693 L1245,698 L1238,703z M1252,693 L1245,698 L1252,703z" fill="#1a60b0"/>

<!-- left toolbar -->
<rect x="7" y="153" width="39" height="557" fill="#ececec"/>
<rect x="7" y="153" width="39" height="9" fill="#7c7c7c"/><rect x="10" y="155" width="14" height="4" fill="url(#dt)"/>
<!-- line -->
<path d="M13,194 L39,166" class="n"/><rect x="11" y="192" width="4" height="4" class="p"/><rect x="37" y="164" width="4" height="4" class="p"/>
<!-- xline -->
<path d="M13,234 L40,205" class="n"/><path d="M11,236 l2,-7 l5,5z M41,204 l-7,2 l5,5z" fill="#333"/><rect x="24" y="218" width="4" height="4" class="p"/>
<!-- polyline -->
<path d="M13,267 H29 C44,267 44,251 29,251" class="n"/><rect x="11" y="265" width="4" height="4" class="p"/><rect x="27" y="265" width="4" height="4" class="p"/><rect x="27" y="249" width="4" height="4" class="p"/>
<!-- polygon -->
<path d="M26,286 L41,297 L35,315 H17 L11,297z" class="i"/>
<!-- rect -->
<rect x="13" y="330" width="26" height="18" class="i"/><rect x="11" y="346" width="4" height="4" class="p"/><rect x="37" y="328" width="4" height="4" class="p"/>
<!-- arc -->
<path d="M13,392 Q16,371 39,365" class="n"/><rect x="11" y="390" width="4" height="4" class="p"/><rect x="19" y="372" width="4" height="4" class="p"/><rect x="37" y="363" width="4" height="4" class="p"/>
<!-- circle -->
<circle cx="26" cy="419" r="15" class="i"/><path d="M26,419 L37,408" class="n"/><rect x="24" y="417" width="4" height="4" class="p"/>
<!-- cloud -->
<path d="M14,444 q5,-8 11,-3 q7,-5 12,0 q7,4 2,11 q6,7 -2,12 q-5,6 -11,1 q-8,5 -12,-1 q-7,-5 -2,-11 q-5,-5 2,-9z" class="i"/>
<!-- spline -->
<path d="M12,514 C16,490 26,492 30,503 C34,508 40,498 41,483" class="n"/>
<!-- ellipse -->
<ellipse cx="26" cy="539" rx="14" ry="11" class="i"/><rect x="24" y="527" width="4" height="4" class="p"/><rect x="37" y="537" width="4" height="4" class="p"/><rect x="11" y="537" width="4" height="4" class="p"/>
<!-- elliptical arc -->
<path d="M13,579 C13,566 40,560 40,577 C40,587 32,590 25,590" class="i" fill-opacity=".9"/><rect x="11" y="577" width="4" height="4" class="p"/><rect x="23" y="588" width="4" height="4" class="p"/>
<!-- insert block -->
<path d="M23,603 H35 L41,610 V628 H23z" class="i"/>
<rect x="12" y="614" width="20" height="18" class="i"/><circle cx="31" cy="626" r="7" class="i"/><rect x="11" y="624" width="4" height="4" class="p"/><path d="M37,634 h4 v-4z" fill="#111"/>
<!-- make block -->
<rect x="13" y="648" width="20" height="17" class="i"/><circle cx="33" cy="663" r="6.500" class="i"/><rect x="12" y="662" width="4" height="4" class="p"/>
<!-- point -->
<rect x="24" y="694" width="3.500" height="3.500" class="p"/>

<!-- tab bar -->
<rect x="52" y="691" width="1168" height="18" fill="#e6e6e8"/>
<g fill="#dcdce0" stroke="#c8c8cc"><rect x="55" y="694" width="11" height="13"/><rect x="71" y="694" width="11" height="13"/><rect x="87" y="694" width="11" height="13"/><rect x="102" y="694" width="10" height="13"/></g>
<path d="M58,700.500 l4,-4 v8z M74,700.500 l4,-4 v8z M94,700.500 l-4,-4 v8z M109,700.500 l-4,-4 v8z" fill="#a8a8ac"/>
<path d="M116,691 L119,707 H157 L163,691z" fill="#111"/>
<text x="125" y="705" font-size="12" fill="#eee" textLength="30" lengthAdjust="spacingAndGlyphs">Model</text>
<text class="t" x="170" y="705" textLength="38" lengthAdjust="spacingAndGlyphs">Layout1</text>
<text class="t" x="225" y="705" textLength="38" lengthAdjust="spacingAndGlyphs">Layout2</text>
<path d="M163,707 L168,693 M214,707 L220,692 M269,707 L275,692" stroke="#555"/>
<path d="M214,707 H269" stroke="#aaa"/>
<rect x="811" y="692" width="390" height="16" fill="#f5f7fb"/>
<rect x="816" y="692" width="16" height="15" fill="url(#btn)" stroke="#ccd"/><path d="M826,695 l-4,4.500 l4,4.500" fill="none" stroke="#223" stroke-width="2"/>
<rect x="1186" y="692" width="15" height="15" fill="url(#btn)" stroke="#ccd"/><path d="M1191,695 l4,4.500 l-4,4.500" fill="none" stroke="#223" stroke-width="2"/>
<rect x="938" y="692" width="16" height="15" fill="url(#btn)" stroke="#ccd"/><path d="M942,696 v8 M945,696 v8 M948,696 v8 M951,696 v8" stroke="#99a"/>
<rect x="1201" y="692" width="19" height="16" fill="#dcdde0"/>

<!-- command window -->
<rect x="2" y="710" width="1268" height="4" fill="#6a6a6a"/>
<rect x="7" y="714" width="13" height="62" fill="#a4a4a4"/><rect x="8" y="716" width="10" height="4" fill="url(#dt)"/>
<rect x="20" y="714" width="1233" height="62" fill="#fff"/>
<text class="c" x="23" y="727" textLength="262">Command: Specify opposite corner:</text>
<text class="c" x="23" y="744" textLength="192">Command: _.erase 1 found</text>
<path d="M23,755.500 H1252" stroke="#bbb" stroke-width="1.500"/>
<text class="c" x="23" y="771" textLength="63">Command:</text>
<rect x="1253" y="714" width="16" height="41" fill="#f4f6fa"/>
<rect x="1254" y="715" width="14" height="16" fill="url(#btn)" stroke="#ccd"/><path d="M1257,725 l4,-4 l4,4" fill="none" stroke="#223" stroke-width="2"/>
<rect x="1254" y="738" width="14" height="16" fill="url(#btn)" stroke="#ccd"/><path d="M1257,744 l4,4 l4,-4" fill="none" stroke="#223" stroke-width="2"/>
<rect x="1186" y="757" width="83" height="18" fill="#f4f6fa"/>
<rect x="1187" y="758" width="14" height="16" fill="url(#btn)" stroke="#ccd"/><path d="M1196,761 l-4,5 l4,5" fill="none" stroke="#223" stroke-width="2"/>
<rect x="1203" y="758" width="15" height="16" fill="url(#btn)" stroke="#ccd"/><path d="M1207,762 v8 M1210,762 v8 M1213,762 v8" stroke="#99a"/>
<rect x="1235" y="758" width="14" height="16" fill="url(#btn)" stroke="#ccd"/><path d="M1240,761 l4,5 l-4,5" fill="none" stroke="#223" stroke-width="2"/>
<rect x="1250" y="757" width="19" height="18" fill="#dcdde0"/>

<!-- status bar -->
<rect x="0" y="776" width="1276" height="25" fill="url(#sb)"/>
<text x="18" y="791" font-size="12" fill="#111" textLength="147" lengthAdjust="spacingAndGlyphs">3820.0000, 1170.0000, 0.0000</text>
<g fill="#9fd6e6" stroke="#8ab"><rect x="208" y="776" width="21" height="22"/><rect x="296" y="776" width="21" height="22"/><rect x="340" y="776" width="21" height="22"/><rect x="406" y="776" width="20" height="22"/></g>
<g fill="#a8a8a8" stroke="#888"><rect x="231" y="776" width="20" height="22" fill="#b8c0c4"/><rect x="253" y="776" width="19" height="22"/><rect x="274" y="776" width="20" height="22"/><rect x="318" y="776" width="20" height="22"/><rect x="362" y="776" width="20" height="22"/><rect x="384" y="776" width="20" height="22"/></g>
<path d="M214,781 h9 M214,784 h9 M214,787 h9 M214,790 h9 M218,781 v10" stroke="#246" stroke-dasharray="1 1"/>
<rect x="234" y="779" width="14" height="15" fill="#ddd" stroke="#333"/><path d="M237,779 v15 M240,779 v15 M243,779 v15 M246,779 v15 M234,782 h14 M234,785 h14 M234,788 h14 M234,791 h14" stroke="#333" stroke-width=".7"/>
<path d="M256,780 v14 h13" fill="none" stroke="#444"/><path d="M256,790 h4 v4" fill="none" stroke="#444"/>
<circle cx="284" cy="788" r="5" fill="none" stroke="#333"/><path d="M280,791 h10 l-6,-7" fill="none" stroke="#222"/>
<rect x="302" y="782" width="12" height="13" fill="#e8f4f8" stroke="#456"/><rect x="298" y="779" width="3" height="3" fill="#fff" stroke="#a60"/>
<path d="M323,792 h12 M323,792 l9,-9" fill="none" stroke="#222"/>
<path d="M344,779 v15 h15 M344,794 l12,-11" fill="none" stroke="#246" stroke-width="1.200"/><path d="M353,778 l-3,5 h3 l-2,4 l5,-5 h-3 l2,-4z" fill="#e0a020"/>
<path d="M367,787 h13 M370,783 v8" stroke="#111" stroke-width="1.300"/><rect x="373" y="786" width="6" height="5" fill="#ccc" stroke="#111"/>
<path d="M387,787 h14 M394,780 v14" stroke="#111" stroke-width="2"/>
<rect x="412" y="780" width="9" height="13" fill="#fff" stroke="#222"/><path d="M414,783 h5 M414,786 h5 M414,789 h5" stroke="#222"/>

<rect x="791" y="778" width="20" height="20" fill="#a8a8a8" stroke="#777"/><rect x="795" y="780" width="12" height="12" fill="#eee" stroke="#333"/><path d="M797,790 l3,-7 l3,7" fill="none" stroke="#333"/><path d="M794,795 h14" stroke="#333" stroke-width="2"/>
<rect x="813" y="778" width="20" height="20" fill="#a8a8a8" stroke="#777"/><rect x="816" y="780" width="7" height="11" fill="#eee" stroke="#333"/><rect x="824" y="780" width="7" height="11" fill="#eee" stroke="#333"/><path d="M816,795 h15" stroke="#333" stroke-width="2"/>
<g fill="#a4a4a4" stroke="#888"><rect x="846" y="776" width="22" height="22"/><rect x="869" y="776" width="20" height="22"/><rect x="890" y="776" width="21" height="22"/><rect x="912" y="776" width="21" height="22"/></g>
<path d="M850,787 l4,-2 l5,2 l4,1 l1,4 l-5,4 l-5,-2z" class="i"/><path d="M862,779 v6 M859,782 h6" stroke="#111" stroke-width="1.300"/>
<circle cx="878" cy="785" r="5.500" fill="#eef" stroke="#333"/><path d="M882,789 l4,5" stroke="#333" stroke-width="2"/>
<circle cx="900" cy="787" r="7" fill="#ccc" stroke="#444"/><circle cx="900" cy="787" r="3" fill="#eee" stroke="#444"/>
<rect x="917" y="785" width="11" height="10" fill="#eee" stroke="#333"/><path d="M921,787 l4,3 l-4,3z" fill="#222"/><path d="M916,780 h3 M921,780 h3 M926,780 h3" stroke="#222" stroke-width="2"/>
<rect x="946" y="776" width="48" height="22" fill="#a0a0a0" stroke="#888"/>
<path d="M951,793 l5,-4 l-0,-8 l0,8 l5,4" fill="#ddd" stroke="#333"/><path d="M956,781 l3,10 l-3,-2 l-3,2z" fill="#eee" stroke="#333" stroke-width=".7"/>
<text x="966" y="792" font-size="13" fill="#111" textLength="15" lengthAdjust="spacingAndGlyphs">1:1</text>
<path d="M984,784 h7 l-3.500,4z" fill="#111"/>
<rect x="997" y="776" width="21" height="22" fill="#a0a0a0" stroke="#888"/><path d="M1002,794 l3,-12 l3,12" fill="#ddd" stroke="#333"/><circle cx="1012" cy="789" r="3" fill="#e8b020"/>
<rect x="1019" y="776" width="20" height="22" fill="#a0a0a0" stroke="#888"/><path d="M1024,794 l4,-12 l4,12" fill="#c8c8c8" stroke="#666"/>
<rect x="1046" y="776" width="114" height="22" fill="#a0a0a0" stroke="#888"/>
<circle cx="1056" cy="787" r="6.500" fill="#ccc" stroke="#222" stroke-dasharray="2 1"/><circle cx="1056" cy="787" r="3" fill="#eee" stroke="#222"/>
<text x="1065" y="792" font-size="13" fill="#111" textLength="83" lengthAdjust="spacingAndGlyphs">AutoCAD Classic</text>
<path d="M1150,783 h8 l-4,4z" fill="#111"/>
<rect x="1162" y="776" width="21" height="22" fill="#a0a0a0" stroke="#888"/><rect x="1165" y="786" width="10" height="8" fill="#eee" stroke="#222"/><path d="M1171,786 v-4 a3,3 0 0 1 6,0 v3" fill="none" stroke="#222"/>
<rect x="1189" y="776" width="27" height="22" fill="#888" stroke="#666"/>
<rect x="1195" y="779" width="8" height="7" fill="#3a70b8"/><path d="M1196,787 l9,-1 l2,7 l-10,1z" fill="#d8c830"/><path d="M1203,792 l3,3 l6,-8" fill="none" stroke="#30a030" stroke-width="2"/>
<path d="M1222,785 h5 l-2.500,5z" fill="#111"/>
<rect x="1233" y="778" width="17" height="18" fill="#ddd" stroke="#222"/><rect x="1233" y="778" width="17" height="3" fill="#555"/>
<rect x="1256" y="776" width="20" height="25" fill="#777"/>
<g fill="#ccc"><rect x="1270" y="789" width="2" height="2"/><rect x="1266" y="793" width="2" height="2"/><rect x="1270" y="793" width="2" height="2"/><rect x="1262" y="797" width="2" height="2"/><rect x="1266" y="797" width="2" height="2"/><rect x="1270" y="797" width="2" height="2"/></g>
</svg>
</body>
</html>
